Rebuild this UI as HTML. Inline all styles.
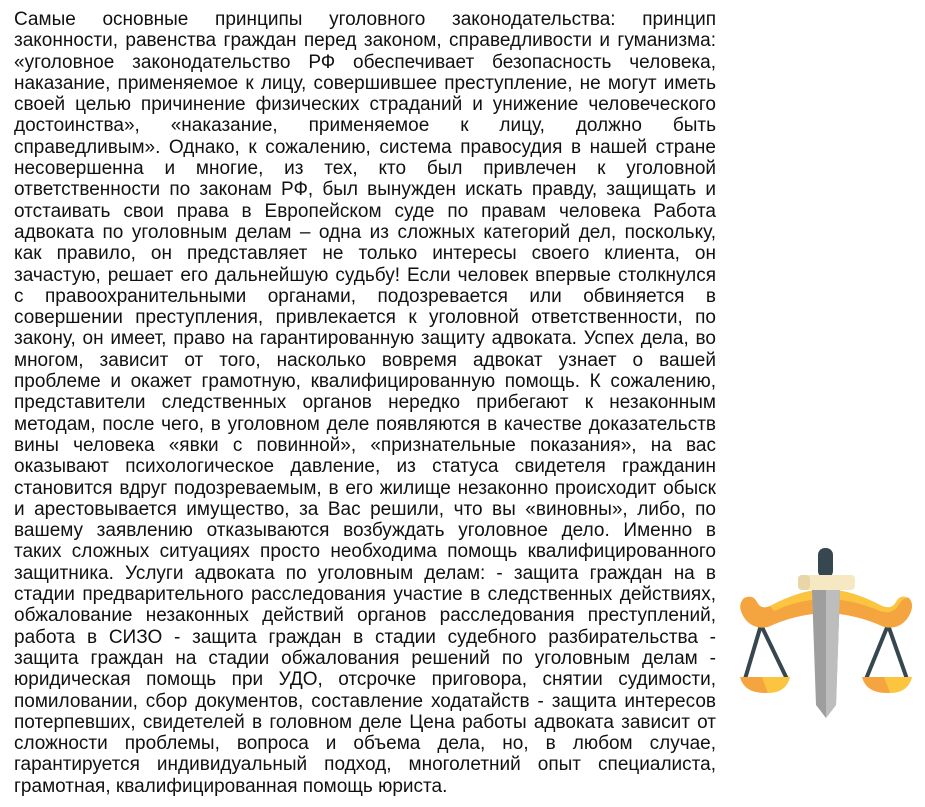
<!DOCTYPE html>
<html><head><meta charset="utf-8"><style>
body{margin:0;background:#fff;width:925px;height:807px;overflow:hidden;position:relative}
#t{position:absolute;left:14px;top:9px;width:702px;font-family:"Liberation Sans",sans-serif;font-size:19px;line-height:21.3px;color:#111}
#t div{text-align:justify;text-align-last:justify;white-space:nowrap;overflow:visible}
#t div.l{text-align-last:left}
svg{position:absolute;left:0;top:0}
</style></head><body>
<div id="t">
<div>Самые основные принципы уголовного законодательства: принцип</div>
<div>законности, равенства граждан перед законом, справедливости и гуманизма:</div>
<div>«уголовное законодательство РФ обеспечивает безопасность человека,</div>
<div>наказание, применяемое к лицу, совершившее преступление, не могут иметь</div>
<div>своей целью причинение физических страданий и унижение человеческого</div>
<div>достоинства», «наказание, применяемое к лицу, должно быть</div>
<div>справедливым». Однако, к сожалению, система правосудия в нашей стране</div>
<div>несовершенна и многие, из тех, кто был привлечен к уголовной</div>
<div>ответственности по законам РФ, был вынужден искать правду, защищать и</div>
<div>отстаивать свои права в Европейском суде по правам человека Работа</div>
<div>адвоката по уголовным делам – одна из сложных категорий дел, поскольку,</div>
<div>как правило, он представляет не только интересы своего клиента, он</div>
<div>зачастую, решает его дальнейшую судьбу! Если человек впервые столкнулся</div>
<div>с правоохранительными органами, подозревается или обвиняется в</div>
<div>совершении преступления, привлекается к уголовной ответственности, по</div>
<div>закону, он имеет, право на гарантированную защиту адвоката. Успех дела, во</div>
<div>многом, зависит от того, насколько вовремя адвокат узнает о вашей</div>
<div>проблеме и окажет грамотную, квалифицированную помощь. К сожалению,</div>
<div>представители следственных органов нередко прибегают к незаконным</div>
<div>методам, после чего, в уголовном деле появляются в качестве доказательств</div>
<div>вины человека «явки с повинной», «признательные показания», на вас</div>
<div>оказывают психологическое давление, из статуса свидетеля гражданин</div>
<div>становится вдруг подозреваемым, в его жилище незаконно происходит обыск</div>
<div>и арестовывается имущество, за Вас решили, что вы «виновны», либо, по</div>
<div>вашему заявлению отказываются возбуждать уголовное дело. Именно в</div>
<div>таких сложных ситуациях просто необходима помощь квалифицированного</div>
<div>защитника. Услуги адвоката по уголовным делам: - защита граждан на в</div>
<div>стадии предварительного расследования участие в следственных действиях,</div>
<div>обжалование незаконных действий органов расследования преступлений,</div>
<div>работа в СИЗО - защита граждан в стадии судебного разбирательства -</div>
<div>защита граждан на стадии обжалования решений по уголовным делам -</div>
<div>юридическая помощь при УДО, отсрочке приговора, снятии судимости,</div>
<div>помиловании, сбор документов, составление ходатайств - защита интересов</div>
<div>потерпевших, свидетелей в головном деле Цена работы адвоката зависит от</div>
<div>сложности проблемы, вопроса и объема дела, но, в любом случае,</div>
<div>гарантируется индивидуальный подход, многолетний опыт специалиста,</div>
<div class="l">грамотная, квалифицированная помощь юриста.</div>
</div>
<svg width="925" height="807" viewBox="0 0 925 807">
<g stroke="#37474f" stroke-width="4" fill="none">
<path d="M761 625 L745 679 M761 625 L787 679"/>
<path d="M888 625 L866 679 M888 625 L907 679"/>
</g>
<path d="M740 677 L790 677 Q786 693 765 693 Q744 693 740 677Z" fill="#f5a540"/>
<path d="M762 677 L790 677 Q786 693 768 693Z" fill="#fbc540"/>
<path d="M862 677 L912 677 Q908 693 887 693 Q866 693 862 677Z" fill="#f5a540"/>
<path d="M884 677 L912 677 Q908 693 890 693Z" fill="#fbc540"/>
<path d="M744 598 Q753 594 757 602 Q761 610 770 606 Q800 590 826 589 Q852 590 882 606 Q892 610 896 602 Q900 594 909 598 Q916 606 907 619 Q898 630 884 627 Q856 614 826 613 Q796 614 768 627 Q754 630 745 619 Q736 606 744 598Z" fill="#f5a540"/>
<path d="M770 606 Q800 590 826 589 Q852 590 882 606 Q892 610 896 602 Q900 594 909 598 Q902 598 898 606 Q892 615 880 611 Q852 599 826 599 Q800 599 774 611Z" fill="#fbc540"/>
<rect x="818" y="548" width="15" height="30" rx="7" fill="#37474f"/>
<path d="M812 590 L840 590 L836 705 L826 718 L816 705Z" fill="#9e9e9e"/>
<path d="M826 590 L840 590 L836 705 L826 718Z" fill="#bdbdbd"/>
<rect x="798" y="575" width="57" height="15" rx="4" fill="#f7e8c4"/>
<rect x="798" y="575" width="12" height="15" rx="4" fill="#e9d6a8"/>
</svg>
</body></html>
